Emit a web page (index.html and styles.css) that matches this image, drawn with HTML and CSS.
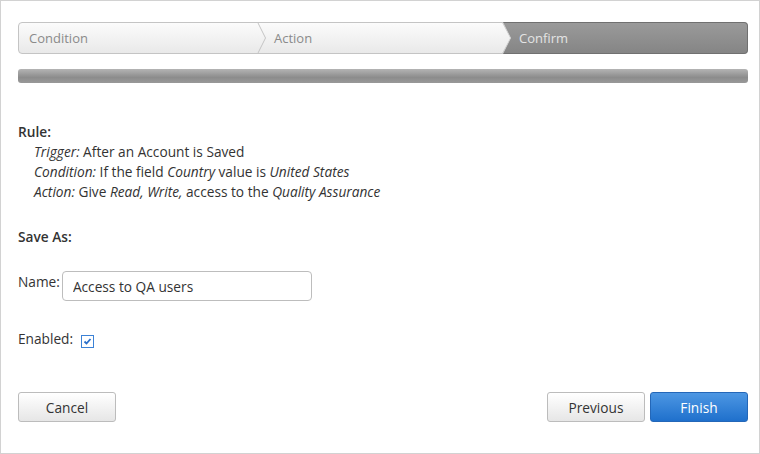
FILE: index.html
```html
<!DOCTYPE html>
<html lang="en">
<head>
  <meta charset="UTF-8" />
  <title>Rule Wizard - Confirm</title>
  <link rel="stylesheet" href="styles.css">
</head>
<body>
  <div class="wizard">
    <div class="steps">
      <div class="step">
        Condition
        <svg class="chev" width="9" height="32" viewBox="0 0 9 32"><polyline points="0.5,0 8.5,16 0.5,32" fill="none" stroke="#c4c4c4" stroke-width="1"/></svg>
      </div>
      <div class="step">
        Action
        <svg class="chev" width="9" height="32" viewBox="0 0 9 32">
          <defs><linearGradient id="g" x1="0" y1="0" x2="0" y2="1"><stop offset="0" stop-color="#fbfbfb"/><stop offset="1" stop-color="#e9e9e9"/></linearGradient></defs>
          <polygon points="0,0 8.5,16 0,32" fill="url(#g)"/>
          <polyline points="0.5,0 8.5,16 0.5,32" fill="none" stroke="#d8d8d8" stroke-width="1"/>
        </svg>
      </div>
      <div class="step current">Confirm</div>
    </div>
    <div class="progress"></div>

    <div class="rule">
      <div class="title">Rule:</div>
      <div class="line"><em>Trigger:</em> After an Account is Saved</div>
      <div class="line"><em>Condition:</em> If the field <em>Country</em> value is <em>United States</em></div>
      <div class="line"><em>Action:</em> Give <em>Read, Write,</em> access to the <em>Quality Assurance</em></div>
    </div>

    <div class="title save">Save As:</div>

    <div class="field name">
      <label>Name:</label>
      <input type="text" value="Access to QA users">
    </div>

    <div class="field enabled">
      <label>Enabled:</label>
      <span class="check">
        <svg width="13" height="13" viewBox="0 0 13 13">
          <rect x="0.5" y="0.5" width="12" height="12" fill="#fff" stroke="#3c82d6"/>
          <polyline points="3.5,6.5 5.5,8.5 9.5,4" fill="none" stroke="#2a6fc9" stroke-width="1.8"/>
        </svg>
      </span>
    </div>

    <div class="buttons">
      <button class="btn">Cancel</button>
      <div class="right">
        <button class="btn">Previous</button>
        <button class="btn primary">Finish</button>
      </div>
    </div>
  </div>
</body>
</html>
```

FILE: styles.css
```css
body {
  margin: 0;
  font-family: "Open Sans", "Noto Sans", sans-serif;
  font-size: 13.7px;
  color: #333;
  background: #fff;
}
.wizard {
  box-sizing: border-box;
  width: 760px;
  height: 454px;
  border: 1px solid #d2d2d2;
  padding: 21px 11px 0 17px;
}
.steps {
  display: flex;
  height: 32px;
  box-sizing: border-box;
  border: 1px solid #c4c4c4;
  border-radius: 4px;
  background: linear-gradient(#fbfbfb, #e9e9e9);
  font-size: 13px;
}
.step {
  position: relative;
  flex: 1;
  line-height: 30px;
  padding-left: 10px;
  color: #8a8a8a;
}
.step + .step {
  padding-left: 17px;
}
.chev {
  position: absolute;
  right: -9px;
  top: -1px;
  z-index: 1;
}
.step.current {
  margin: -1px -1px -1px 0;
  line-height: 30px;
  border: 1px solid #707070;
  border-left: none;
  border-radius: 0 4px 4px 0;
  background: linear-gradient(#9a9a9a, #858585);
  color: #e4e4e4;
}
.progress {
  margin-top: 15px;
  height: 14px;
  border-radius: 3px;
  background: linear-gradient(#b4b4b4, #8c8c8c 60%, #999);
}
.rule {
  margin-top: 39px;
  line-height: 20px;
}
.title {
  font-weight: 600;
  line-height: 20px;
}
.line {
  padding-left: 16px;
}
.save {
  margin-top: 25px;
}
.field {
  display: flex;
  align-items: flex-start;
}
.field label {
  line-height: 20px;
}
.name {
  margin-top: 24px;
}
.name label {
  padding-top: 1px;
  margin-right: 2px;
}
.name input {
  box-sizing: border-box;
  width: 250px;
  height: 30px;
  padding: 0 10px;
  border: 1px solid #bdbdbd;
  border-radius: 4px;
  font-family: inherit;
  font-size: 13.7px;
  color: #333;
}
.enabled {
  margin-top: 28px;
}
.check {
  margin-left: 8px;
  padding-top: 6px;
  line-height: 0;
}
.buttons {
  margin-top: 43px;
  display: flex;
  justify-content: space-between;
}
.right {
  display: flex;
  gap: 5px;
}
.btn {
  box-sizing: border-box;
  width: 98px;
  height: 30px;
  border: 1px solid #bcbcbc;
  border-radius: 3px;
  background: linear-gradient(#ffffff, #e6e6e6);
  font-family: inherit;
  font-size: 13.7px;
  color: #333;
}
.btn.primary {
  border-color: #2467b8;
  background: linear-gradient(#4d97e3, #1f70cc);
  color: #fff;
}
```
